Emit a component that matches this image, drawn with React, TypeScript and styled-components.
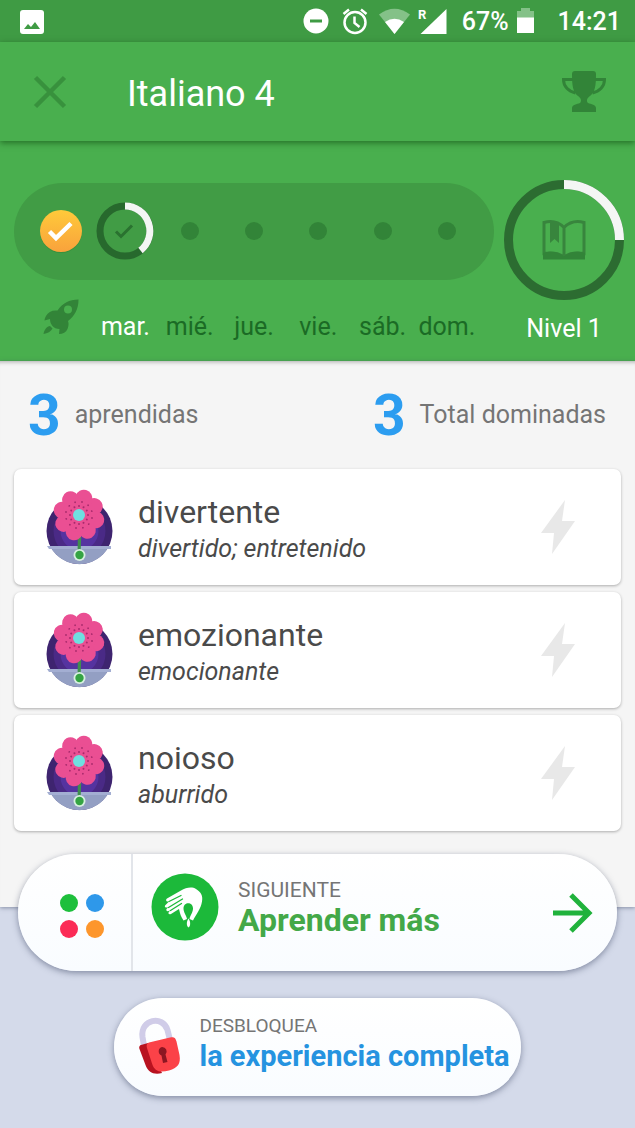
import React from "react";
import styled, { createGlobalStyle, css } from "styled-components";

const Global = createGlobalStyle`
  *, *::before, *::after { box-sizing: border-box; }
  body {
    margin: 0;
    background: #d4daea;
    font-family: Roboto, "Liberation Sans", sans-serif;
  }
  button { font: inherit; border: 0; margin: 0; padding: 0; background: none; cursor: pointer; }
  h1, h2, p, ul { margin: 0; padding: 0; font-weight: 400; }
  svg { display: block; flex: none; }
`;

const Page = styled.div`
  display: flex;
  flex-direction: column;
  min-height: 100vh;
  background: #d4daea;
`;

const StatusBar = styled.div`
  display: flex;
  align-items: center;
  justify-content: space-between;
  height: 42px;
  padding: 2px 14px 0 20px;
  background: #3f9b44;
  color: #fff;
  font-size: 25px;
  font-weight: 500;
  line-height: 30px;
`;

const StatusGroup = styled.div`
  display: flex;
  align-items: center;
`;

const StatusText = styled.span<{ $gap: number }>`
  margin-left: ${(p) => p.$gap}px;
`;

const AppBar = styled.header`
  position: relative;
  display: flex;
  align-items: center;
  height: 99px;
  padding: 0 28px 0 33px;
  background: #49af4e;
  box-shadow: 0 2px 6px rgba(0, 50, 0, 0.5);
`;

const Title = styled.h1`
  flex: 1;
  margin-left: 60px;
  padding-top: 4px;
  color: #fff;
  font-size: 36px;
  line-height: 44px;
`;

const Progress = styled.section`
  display: flex;
  align-items: flex-start;
  gap: 10px;
  height: 220px;
  padding: 39px 11px 0 14px;
  background: #49af4e;
`;

const Week = styled.div`
  flex: 1;
  padding-top: 3px;
`;

const sevenDays = css`
  display: grid;
  grid-template-columns: repeat(7, 1fr);
  justify-items: center;
  align-items: center;
`;

const Track = styled.div`
  ${sevenDays}
  height: 97px;
  padding: 0 15px 2px;
  border-radius: 49px;
  background: #419c45;
`;

const Days = styled.div`
  ${sevenDays}
  height: 56px;
  margin-top: 18px;
  padding: 0 15px;
`;

const Day = styled.span<{ $active?: boolean }>`
  padding-top: 2px;
  color: ${(p) => (p.$active ? "#fff" : "#1b6b25")};
  font-size: 25px;
  line-height: 30px;
`;

const Dot = styled.span`
  width: 18px;
  height: 18px;
  border-radius: 50%;
  background: #328438;
`;

const Level = styled.div`
  display: flex;
  flex-direction: column;
  align-items: center;
  gap: 14px;
  color: #fff;
  font-size: 25px;
  line-height: 30px;
`;

const Content = styled.main`
  padding: 24px 14px 76px;
  background: #f5f5f5;
  box-shadow: 0 1px 4px rgba(60, 70, 100, 0.5), inset 0 5px 4px -4px rgba(0, 0, 0, 0.3);
`;

const Stats = styled.div`
  display: flex;
  justify-content: space-between;
  padding: 0 15px 0 14px;
  margin-bottom: 24px;
`;

const Stat = styled.p`
  display: flex;
  align-items: center;
  gap: 14px;
  color: #757575;
  font-size: 25px;
  line-height: 58px;
`;

const StatNumber = styled.strong`
  padding-top: 2px;
  color: #2c9df0;
  font-size: 57px;
  font-weight: 700;
`;

const Words = styled.ul`
  display: flex;
  flex-direction: column;
  gap: 7px;
  list-style: none;
`;

const WordCard = styled.li`
  display: flex;
  align-items: center;
  padding: 0 46px 0 32px;
  border-radius: 7px;
  background: #fff;
  box-shadow: 0 1px 3px rgba(0, 0, 0, 0.3);
`;

const WordText = styled.div`
  flex: 1;
  padding: 24px 0 18px;
  margin-left: 25px;
  color: #4a4a4a;
`;

const Term = styled.h2`
  font-size: 32px;
  line-height: 38px;
`;

const Meaning = styled.p`
  font-size: 25px;
  font-style: italic;
  line-height: 36px;
`;

const Actions = styled.footer`
  position: relative;
  display: flex;
  flex-direction: column;
  align-items: center;
  gap: 27px;
  margin-top: -53px;
  padding: 0 18px 32px;
`;

const pill = css`
  display: flex;
  background: linear-gradient(#fff, #f9fcff);
  box-shadow: 0 2px 6px rgba(50, 60, 90, 0.5);
`;

const NextBar = styled.div`
  ${pill}
  width: 100%;
  height: 117px;
  border-radius: 59px;
`;

const ModesButton = styled.button`
  display: grid;
  place-items: center;
  width: 115px;
  padding: 7px 0 0 14px;
  border-right: 2px solid #e2e5ea;
`;

const NextButton = styled.button`
  display: flex;
  flex: 1;
  align-items: center;
  padding: 0 24px 11px 18px;
  text-align: left;
`;

const UnlockButton = styled.button`
  ${pill}
  align-items: center;
  height: 98px;
  padding: 0 11px 9px 24px;
  border-radius: 49px;
  text-align: left;
`;

const Labels = styled.span<{ $gap: number }>`
  display: flex;
  flex: 1;
  flex-direction: column;
  margin-left: ${(p) => p.$gap}px;
`;

const Caption = styled.span<{ $size: number }>`
  color: #757575;
  font-size: ${(p) => p.$size}px;
  line-height: 26px;
`;

const Action = styled.span<{ $size: number; $color: string }>`
  color: ${(p) => p.$color};
  font-size: ${(p) => p.$size}px;
  font-weight: 700;
  line-height: 34px;
`;

const ArrowSlot = styled.span`
  padding-top: 11px;
`;

const PictureIcon = () => (
  <svg width="24" height="24" viewBox="0 0 24 24">
    <rect width="24" height="24" rx="3" fill="#fff" />
    <path d="M4 19l4-5 3 3 4-5 5 7z" fill="#3f9b44" />
  </svg>
);

const SystemIcons = () => (
  <svg width="144" height="28" viewBox="0 0 144 28" fill="none">
    <circle cx="13" cy="13" r="12.500" fill="#fff" />
    <path d="M7 13h12" stroke="#3f9b44" strokeWidth="3" />
    <circle cx="52" cy="14.500" r="10.500" stroke="#fff" strokeWidth="2.500" />
    <path d="M51.500 8.500v6.500l5 4M46 1.500l-5.500 4.500M58 1.500l5.500 4.500" stroke="#fff" strokeWidth="2.500" />
    <path d="M91.500 26L76 6.500Q91.500-5 107 6.500z" fill="#84c188" />
    <path d="M91.500 26L82 14Q91.500 7.500 101 14z" fill="#fff" />
    <path d="M143.500 1v25h-26z" fill="#fff" />
    <text x="115" y="11" fill="#fff" fontFamily="Roboto, sans-serif" fontSize="13" fontWeight="700">R</text>
  </svg>
);

const BatteryIcon = () => (
  <svg width="17" height="28" viewBox="0 0 17 28">
    <path d="M0 3h4V0h9v3h4v8H0z" fill="#84c188" />
    <path d="M0 9.500h17V25H0z" fill="#fff" />
  </svg>
);

const CloseIcon = () => (
  <svg width="34" height="34" viewBox="0 0 34 34">
    <path d="M2.500 2.500l29 29M31.500 2.500l-29 29" stroke="#38913d" strokeWidth="4.500" />
  </svg>
);

const TrophyIcon = () => (
  <svg width="46" height="46" viewBox="0 0 46 46" fill="none">
    <path d="M12 10.500H2.500c0 7 5 12 12 13.500M34 10.500h9.500c0 7-5 12-12 13.500" stroke="#328438" strokeWidth="3" />
    <path
      d="M14 2h18q3 0 3 3c0 12-1 18-6 22-3 2-4 5-2 7 3 1 8 2 8 5v4H11v-4c0-3 5-4 8-5 2-2 1-5-2-7-5-4-6-10-6-22q0-3 3-3z"
      fill="#328438"
    />
  </svg>
);

const DoneBadge = () => (
  <svg width="44" height="46" viewBox="0 0 44 46">
    <defs>
      <linearGradient id="gold" x1="0" y1="0" x2="0" y2="1">
        <stop offset="0" stopColor="#ffca3a" />
        <stop offset="1" stopColor="#f9a23c" />
      </linearGradient>
    </defs>
    <circle cx="22" cy="24" r="21" fill="#2f8536" opacity="0.5" />
    <circle cx="22" cy="23" r="21" fill="url(#gold)" />
    <path d="M10.500 23.500l6.500 6.500L32 15.500" fill="none" stroke="#fff" strokeWidth="4.500" />
  </svg>
);

const TodayRing = () => (
  <svg width="58" height="58" viewBox="0 0 58 58" fill="none">
    <circle cx="29" cy="29" r="25" stroke="#27692d" strokeWidth="7" />
    <path d="M29 4A25 25 0 0 1 44.500 48.500" stroke="#f4f6f4" strokeWidth="7" />
    <path d="M20 29.500l5 5 11-11" stroke="#2a7230" strokeWidth="3" />
  </svg>
);

const LevelRing = () => (
  <svg width="120" height="120" viewBox="0 0 120 120" fill="none">
    <circle cx="60" cy="60" r="55.500" stroke="#2c6c31" strokeWidth="9" />
    <path d="M60 4.500A55.500 55.500 0 0 1 115.500 60" stroke="#f4f6f4" strokeWidth="9" />
    <path
      d="M40 42.500c7-2 14-1 20 5 6-6 13-7 20-5v31c-7-1-14-1-20 3.500-6-4.500-13-4.500-20-3.500zM60 47v29"
      stroke="#38853d"
      strokeWidth="3"
    />
    <path d="M46 42h9v21l-4.500-4-4.500 4z" fill="#38853d" />
    <path d="M39 73c9-2.500 15-1.500 21 3.500 6-5 12-6 21-3.500v6.500H39z" fill="#328438" />
  </svg>
);

const RocketIcon = () => (
  <svg width="36" height="54" viewBox="0 0 36 54">
    <path
      fillRule="evenodd"
      fill="#328438"
      d="M35.500 0.500C26 0.500 20 4 14.500 11.500 9 11 5 13 3 17c-1 2-1.500 3-1.500 4.500l5.500-1.500c0 3 1 5 2.500 7s4 3 7 3L16 35c4 0 7-1.500 8.500-5 1-3 1.500-5 .5-8C32 16.500 35.500 10 35.500 0.500zM25 6.500a4 4 0 1 1 0 8 4 4 0 0 1 0-8z"
    />
    <path d="M7 27c-3 0-6 4-6.500 8 4-.500 7.500-2.500 9-5.500z" fill="#328438" />
  </svg>
);

const petals = [0, 45, 90, 135, 180, 225, 270, 315];
const seeds = Array.from({ length: 12 }, (_, i) => i * 30);

const FlowerIcon = () => (
  <svg width="67" height="78" viewBox="0 0 67 78">
    <circle cx="33.500" cy="43" r="33" fill="#3e246f" />
    <circle cx="33.500" cy="43" r="26" fill="#4a2a86" />
    <circle cx="33.500" cy="43" r="19" fill="#5533a0" />
    <path d="M4.500 59h58A33 33 0 0 1 4.500 59z" fill="#939fc3" />
    <path d="M1 58h64v3H3z" fill="#a3aed2" />
    <path d="M32 42h3.500l-1 24h-3z" fill="#3f8f4d" />
    {petals.map((a) => (
      <circle key={a} cx="33" cy="9.500" r="8.400" fill="#ea4f93" transform={`rotate(${a + 16} 33 27)`} />
    ))}
    <circle cx="33" cy="27" r="17" fill="#ea4f93" />
    {seeds.map((a) => (
      <g key={a} fill="#a92a6c" transform={`rotate(${a} 33 27)`}>
        <circle cx="33" cy="18" r="1" />
        <circle cx="36" cy="14" r="0.900" />
      </g>
    ))}
    <circle cx="33" cy="27" r="6" fill="#6fdfe0" />
    <circle cx="33.500" cy="67" r="6" fill="#d7efe0" />
    <circle cx="33.500" cy="67" r="4.200" fill="#35a443" />
  </svg>
);

const BoltIcon = () => (
  <svg width="34" height="54" viewBox="0 0 34 54">
    <path d="M24 0L0 33h13L11 54 34 21H21z" fill="#e8e8e8" />
  </svg>
);

const ModesIcon = () => (
  <svg width="44" height="44" viewBox="0 0 44 44">
    <circle cx="9" cy="9" r="9" fill="#1dbf3c" />
    <circle cx="35" cy="9" r="9" fill="#2e98ea" />
    <circle cx="9" cy="35" r="9" fill="#fb2b56" />
    <circle cx="35" cy="35" r="9" fill="#fd962c" />
  </svg>
);

const PlantIcon = () => (
  <svg width="68" height="68" viewBox="0 0 68 68">
    <circle cx="34" cy="34" r="33.500" fill="#1cb93a" />
    <path
      d="M16 25.500L30 17.500C35 14.500 41 13.500 45 16c5 3 7 6.500 6 12.500-1.200 7.500-5.500 12-9 19l-3.500-1.500c.5-3.500 3.500-6.500 3.500-10.500 0-7-9.500-7-9.500 0 0 4 3 7 3.500 10.500L32.500 47.500c-2.500-3.500-3.500-7-4.500-11.500l-8 5c-2 1-3.500-.8-2-2.300l1.500-1.500-2 .8c-2 .8-3-1.200-1.500-2.400l1.500-1.300-1.500.2c-2 .5-3-1.500-1.200-2.700L18 28.500l-1.200 0c-1.800.3-2.300-2-.8-3z"
      fill="#fff"
    />
    <path
      d="M18 28.500L30 22.500M17.500 34.500L31.500 26M19.500 37.500L30.500 30.500"
      stroke="#1cb93a"
      strokeWidth="1.300"
      strokeLinecap="round"
    />
    <path d="M37.500 45.500c2.200 3 2.200 7.500 0 9-2.200-1.500-2.200-6 0-9z" fill="#fff" />
  </svg>
);

const ArrowIcon = () => (
  <svg width="40" height="40" viewBox="0 0 40 40" fill="none">
    <path d="M0 20h36M18 2l18 18-18 18" stroke="#20b23c" strokeWidth="5" />
  </svg>
);

const LockIcon = () => (
  <svg width="43" height="62" viewBox="0 -6 43 62">
    <path d="M6 28L4.500 19C2 1 25-3 29.500 12L32 22" fill="none" stroke="#d0cce8" strokeWidth="6" />
    <path d="M3 27l7-2 14 30c-8 2-14-.500-16.500-8L1.500 31c-.8-2 0-3.500 1.500-4z" fill="#b81220" />
    <path d="M11 24.500l21-5c4-1 5.500 0 6.500 4L41.500 37c1.500 9-2 13-10.500 15.500-9 2.500-14.500 1-17-7L9 30c-1-3 0-4.500 2-5.500z" fill="#fb4248" />
    <path d="M24 29a4.500 4.500 0 0 1 3.500 7.500l2 7.500-4.500 1-1.500-7.500A4.500 4.500 0 0 1 24 29z" fill="#8c1622" />
  </svg>
);

const days = ["mié.", "jue.", "vie.", "sáb.", "dom."];

const words = [
  { term: "divertente", meaning: "divertido; entretenido" },
  { term: "emozionante", meaning: "emocionante" },
  { term: "noioso", meaning: "aburrido" },
];

export default function App() {
  return (
    <Page>
      <Global />
      <StatusBar>
        <PictureIcon />
        <StatusGroup>
          <SystemIcons />
          <StatusText $gap={15}>67%</StatusText>
          <StatusText $gap={8}>
            <BatteryIcon />
          </StatusText>
          <StatusText $gap={24}>14:21</StatusText>
        </StatusGroup>
      </StatusBar>
      <AppBar>
        <button aria-label="Cerrar">
          <CloseIcon />
        </button>
        <Title>Italiano 4</Title>
        <button aria-label="Clasificación">
          <TrophyIcon />
        </button>
      </AppBar>
      <Progress>
        <Week>
          <Track>
            <DoneBadge />
            <TodayRing />
            {days.map((d) => (
              <Dot key={d} />
            ))}
          </Track>
          <Days>
            <RocketIcon />
            <Day $active>mar.</Day>
            {days.map((d) => (
              <Day key={d}>{d}</Day>
            ))}
          </Days>
        </Week>
        <Level>
          <LevelRing />
          <span>Nivel 1</span>
        </Level>
      </Progress>
      <Content>
        <Stats>
          <Stat>
            <StatNumber>3</StatNumber>
            aprendidas
          </Stat>
          <Stat>
            <StatNumber>3</StatNumber>
            Total dominadas
          </Stat>
        </Stats>
        <Words>
          {words.map((w) => (
            <WordCard key={w.term}>
              <FlowerIcon />
              <WordText>
                <Term>{w.term}</Term>
                <Meaning>{w.meaning}</Meaning>
              </WordText>
              <BoltIcon />
            </WordCard>
          ))}
        </Words>
      </Content>
      <Actions>
        <NextBar>
          <ModesButton aria-label="Modos">
            <ModesIcon />
          </ModesButton>
          <NextButton>
            <PlantIcon />
            <Labels $gap={19}>
              <Caption $size={21}>SIGUIENTE</Caption>
              <Action $size={32} $color="#43a848">Aprender más</Action>
            </Labels>
            <ArrowSlot>
              <ArrowIcon />
            </ArrowSlot>
          </NextButton>
        </NextBar>
        <UnlockButton>
          <LockIcon />
          <Labels $gap={18}>
            <Caption $size={19}>DESBLOQUEA</Caption>
            <Action $size={29} $color="#2593e0">la experiencia completa</Action>
          </Labels>
        </UnlockButton>
      </Actions>
    </Page>
  );
}
